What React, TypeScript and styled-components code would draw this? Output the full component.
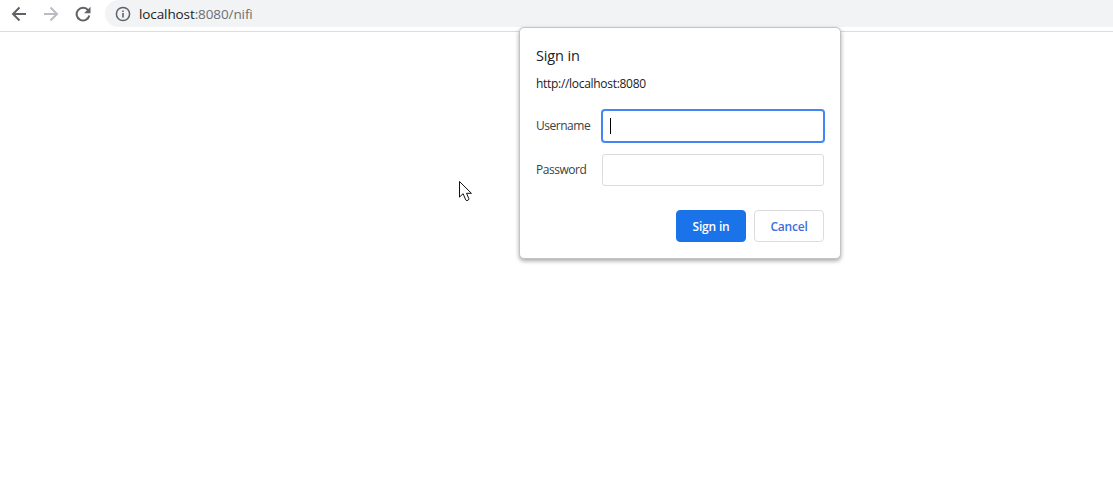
import styled, { createGlobalStyle } from "styled-components";

const GlobalStyle = createGlobalStyle`
  html, body {
    margin: 0;
    height: 100%;
    background: #fff;
    font-family: "Open Sans", "Noto Sans", "Liberation Sans", sans-serif;
  }
`;

const Page = styled.div`
  position: relative;
  width: 1113px;
  height: 494px;
  overflow: hidden;
  background: #fff;
`;

const Toolbar = styled.div`
  display: flex;
  align-items: flex-start;
  height: 31px;
  border-bottom: 1px solid #dadce0;
  box-sizing: content-box;
`;

const NavButton = styled.div<{ $disabled?: boolean }>`
  display: flex;
  align-items: center;
  justify-content: center;
  width: 32px;
  height: 27px;
  color: ${(p) => (p.$disabled ? "#b9bcc0" : "#5f6368")};
`;

const NavGroup = styled.div`
  display: flex;
  padding-left: 3px;
`;

const Omnibox = styled.div`
  display: flex;
  align-items: center;
  gap: 8px;
  margin-left: 6px;
  padding-left: 10px;
  width: 1008px;
  height: 27px;
  background: #f1f3f4;
  border-bottom-left-radius: 14px;
  border-top-left-radius: 14px;
`;

const Url = styled.div`
  font-size: 13.5px;
  letter-spacing: -0.1px;
  color: #6b6f73;

  b {
    font-weight: 400;
    color: #202124;
  }
`;

const Dialog = styled.div`
  position: absolute;
  left: 519px;
  top: 27px;
  width: 322px;
  height: 232px;
  box-sizing: border-box;
  padding: 17px 16px 0;
  background: #fff;
  border: 1px solid #c4c4c4;
  border-radius: 5px;
  box-shadow: 0 2px 4px rgba(0, 0, 0, 0.35);
  color: #202124;
`;

const Title = styled.div`
  font-size: 14.5px;
  line-height: 22px;
  letter-spacing: -0.15px;
`;

const Origin = styled.div`
  margin-top: 8px;
  font-size: 12px;
  line-height: 18px;
  letter-spacing: -0.3px;
`;

const Form = styled.div`
  display: flex;
  flex-direction: column;
  gap: 12px;
  margin-top: 17px;
`;

const Row = styled.div`
  display: grid;
  grid-template-columns: 66px 222px;
  align-items: center;
`;

const Label = styled.label`
  padding-bottom: 2px;
  font-size: 12px;
  letter-spacing: -0.48px;
  color: #3c4043;
`;

const Field = styled.div<{ $focused?: boolean }>`
  display: flex;
  align-items: center;
  box-sizing: border-box;
  height: 32px;
  padding-left: 7px;
  border-radius: 3px;
  background: #fff;
  border: 1px solid ${(p) => (p.$focused ? "#4285f4" : "#dadce0")};
  box-shadow: ${(p) => (p.$focused ? "0 0 0 1px #4285f4" : "none")};
`;

const Caret = styled.span`
  width: 1px;
  height: 16px;
  background: #000;
`;

const Actions = styled.div`
  display: flex;
  justify-content: flex-end;
  gap: 8px;
  margin-top: 24px;
`;

const Button = styled.button<{ $primary?: boolean }>`
  width: 70px;
  height: 32px;
  padding: 0;
  box-sizing: border-box;
  border-radius: 4px;
  font-family: inherit;
  font-size: 12px;
  font-weight: 600;
  letter-spacing: -0.2px;
  background: ${(p) => (p.$primary ? "#1a73e8" : "#fff")};
  color: ${(p) => (p.$primary ? "#fff" : "#3b6fdc")};
  border: 1px solid ${(p) => (p.$primary ? "#1a73e8" : "#dadce0")};
`;

const Cursor = styled.svg`
  position: absolute;
  left: 459px;
  top: 181px;
`;

export default function App() {
  return (
    <Page>
      <GlobalStyle />
      <Toolbar>
        <NavGroup>
          <NavButton>
            <svg width="16" height="16" viewBox="0 0 16 16" fill="none" stroke="currentColor" strokeWidth="2">
              <path d="M15 8H2M8.5 1.5 2 8l6.5 6.5" />
            </svg>
          </NavButton>
          <NavButton $disabled>
            <svg width="16" height="16" viewBox="0 0 16 16" fill="none" stroke="currentColor" strokeWidth="2">
              <path d="M1 8h13M7.5 1.5 14 8l-6.5 6.5" />
            </svg>
          </NavButton>
          <NavButton>
            <svg width="16" height="16" viewBox="0 0 16 16" fill="none">
              <path d="M13.2 4.4A6.4 6.4 0 1 0 14.3 9.5" stroke="currentColor" strokeWidth="2" />
              <path d="M15.5 0.8v6.4H9.1z" fill="currentColor" />
            </svg>
          </NavButton>
        </NavGroup>
        <Omnibox>
          <svg width="16" height="16" viewBox="0 0 16 16" fill="none" color="#5f6368">
            <circle cx="8" cy="8" r="6.6" stroke="currentColor" strokeWidth="1.5" />
            <path d="M8 7v4.4M8 4.4v1.6" stroke="currentColor" strokeWidth="1.6" />
          </svg>
          <Url>
            <b>localhost</b>:8080/nifi
          </Url>
        </Omnibox>
      </Toolbar>

      <Cursor width="13" height="21" viewBox="0 0 13 21" fill="#fff" stroke="#111" strokeWidth="1">
        <path d="M.5.5v15.6l3.6-3.4 2.6 6.2 1.2.8 1.6-.8.4-1.2-2.4-5.4h4.9z" />
      </Cursor>

      <Dialog>
        <Title>Sign in</Title>
        <Origin>http://localhost:8080</Origin>
        <Form>
          <Row>
            <Label>Username</Label>
            <Field $focused>
              <Caret />
            </Field>
          </Row>
          <Row>
            <Label>Password</Label>
            <Field />
          </Row>
        </Form>
        <Actions>
          <Button $primary>Sign in</Button>
          <Button>Cancel</Button>
        </Actions>
      </Dialog>
    </Page>
  );
}
